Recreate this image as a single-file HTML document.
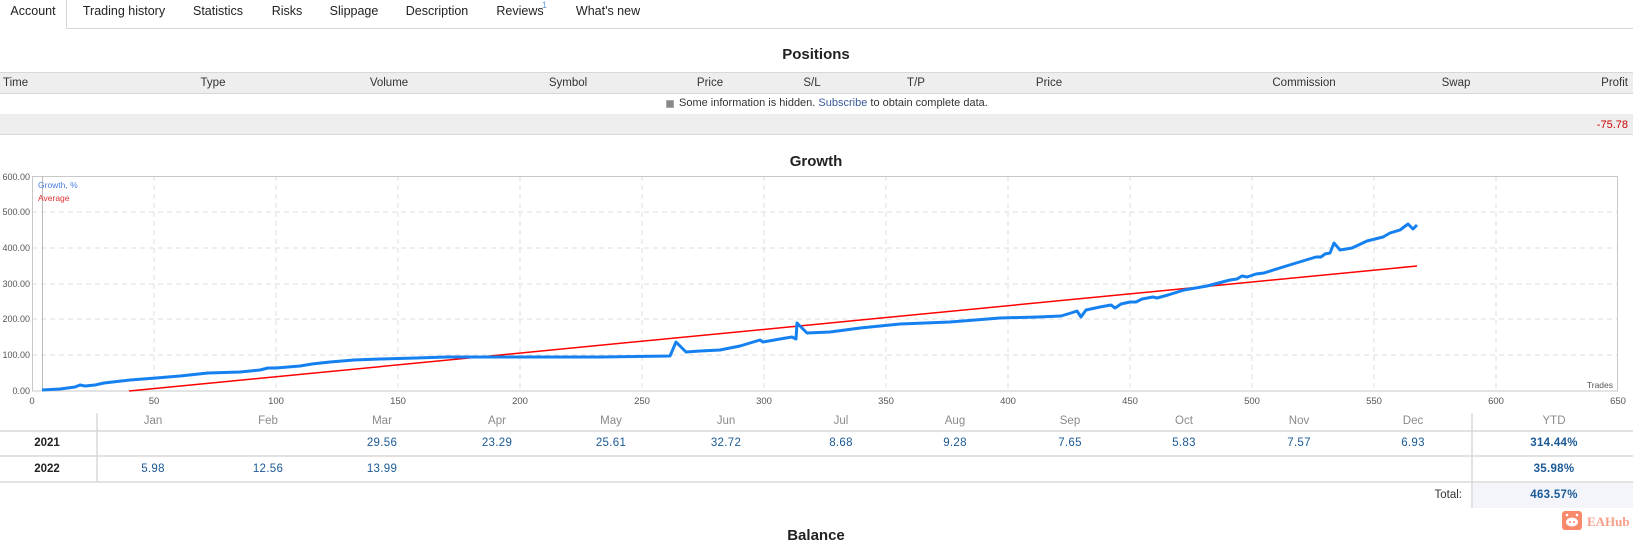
<!DOCTYPE html>
<html><head><meta charset="utf-8"><style>
*{margin:0;padding:0;box-sizing:border-box}
body{width:1633px;height:536px;overflow:hidden;background:#fff;font-family:"Liberation Sans",Tahoma,sans-serif;color:#333;position:relative}
.a{position:absolute;white-space:nowrap}
.t{font-size:12.5px;color:#222;top:4px;transform:translateX(-50%)}
.h{font-size:11.5px;color:#333;top:77px}
.c{transform:translateX(-50%)}
.title{font-size:15px;font-weight:bold;color:#222;transform:translateX(-50%);left:816px}
.mo{font-size:11.5px;color:#8a8a8a;top:415px;transform:translateX(-50%)}
.v{font-size:11.5px;color:#1a5a96;transform:translateX(-50%);letter-spacing:.3px}
.y{font-size:11.5px;color:#222;transform:translateX(-50%);left:47px;font-weight:bold}
</style></head><body>
<div class="a" style="left:0;top:28px;width:1633px;border-top:1px solid #d6d6d6"></div>
<div class="a" style="left:0;top:0;width:67px;height:29px;background:#fff;border-right:1px solid #d6d6d6"></div>
<div class="a t" style="left:33px">Account</div>
<div class="a t" style="left:124px">Trading history</div>
<div class="a t" style="left:218px">Statistics</div>
<div class="a t" style="left:287px">Risks</div>
<div class="a t" style="left:354px">Slippage</div>
<div class="a t" style="left:437px">Description</div>
<div class="a t" style="left:520px">Reviews</div>
<div class="a" style="left:542px;top:0;font-size:9px;color:#6a9ad6">1</div>
<div class="a t" style="left:608px">What's new</div>

<div class="a title" style="top:46px">Positions</div>
<div class="a" style="left:0;top:72px;width:1633px;height:22px;background:#eee;border-top:1px solid #d8d8d8;border-bottom:1px solid #d8d8d8"></div>
<div class="a h" style="left:3px">Time</div>
<div class="a h c" style="left:213px">Type</div>
<div class="a h c" style="left:389px">Volume</div>
<div class="a h c" style="left:568px">Symbol</div>
<div class="a h c" style="left:710px">Price</div>
<div class="a h c" style="left:812px">S/L</div>
<div class="a h c" style="left:916px">T/P</div>
<div class="a h c" style="left:1049px">Price</div>
<div class="a h c" style="left:1304px">Commission</div>
<div class="a h c" style="left:1456px">Swap</div>
<div class="a h" style="right:5px">Profit</div>
<div class="a" style="left:666px;top:100px;width:8px;height:8px;background:#888;border:1px solid #aaa"></div>
<div class="a" style="left:679px;top:97px;font-size:11px;color:#333">Some information is hidden. <span style="color:#3a5a9a">Subscribe</span> to obtain complete data.</div>
<div class="a" style="left:0;top:114px;width:1633px;height:21px;background:#eee;border-bottom:1px solid #d8d8d8"></div>
<div class="a" style="right:5px;top:119px;font-size:11px;color:#c00">-75.78</div>

<div class="a title" style="top:153px">Growth</div>

<svg class="a" style="left:0;top:0" width="1633" height="536" xmlns="http://www.w3.org/2000/svg">
<g stroke="#ddd" stroke-dasharray="5,4" stroke-width="1">
<line x1="32" y1="212" x2="1618" y2="212"/><line x1="32" y1="248" x2="1618" y2="248"/><line x1="32" y1="284" x2="1618" y2="284"/><line x1="32" y1="319" x2="1618" y2="319"/><line x1="32" y1="355" x2="1618" y2="355"/>
<line x1="154" y1="176" x2="154" y2="391"/><line x1="276" y1="176" x2="276" y2="391"/><line x1="398" y1="176" x2="398" y2="391"/><line x1="520" y1="176" x2="520" y2="391"/><line x1="642" y1="176" x2="642" y2="391"/><line x1="764" y1="176" x2="764" y2="391"/><line x1="886" y1="176" x2="886" y2="391"/><line x1="1008" y1="176" x2="1008" y2="391"/><line x1="1130" y1="176" x2="1130" y2="391"/><line x1="1252" y1="176" x2="1252" y2="391"/><line x1="1374" y1="176" x2="1374" y2="391"/><line x1="1496" y1="176" x2="1496" y2="391"/>
</g>
<rect x="32.5" y="176.5" width="1585" height="214.5" fill="none" stroke="#c8c8c8"/>
<line x1="42.5" y1="176" x2="42.5" y2="391" stroke="#bbb"/>
<g font-family="Liberation Sans,sans-serif" font-size="9" fill="#555" text-anchor="end">
<text x="30" y="180">600.00</text><text x="30" y="215">500.00</text><text x="30" y="251">400.00</text><text x="30" y="287">300.00</text><text x="30" y="322">200.00</text><text x="30" y="358">100.00</text><text x="30" y="394">0.00</text>
</g>
<g font-family="Liberation Sans,sans-serif" font-size="9.5" fill="#555" text-anchor="middle">
<text x="32" y="404">0</text><text x="154" y="404">50</text><text x="276" y="404">100</text><text x="398" y="404">150</text><text x="520" y="404">200</text><text x="642" y="404">250</text><text x="764" y="404">300</text><text x="886" y="404">350</text><text x="1008" y="404">400</text><text x="1130" y="404">450</text><text x="1252" y="404">500</text><text x="1374" y="404">550</text><text x="1496" y="404">600</text><text x="1618" y="404">650</text>
</g>
<text x="1613" y="388" font-family="Liberation Sans,sans-serif" font-size="8.5" fill="#555" text-anchor="end">Trades</text>
<text x="38" y="188" font-family="Liberation Sans,sans-serif" font-size="8.5" fill="#4a7ee0">Growth, %</text>
<text x="38" y="201" font-family="Liberation Sans,sans-serif" font-size="8.5" fill="#e03030">Average</text>
<line x1="129" y1="391" x2="1417" y2="266" stroke="#f00" stroke-width="1.5"/>
<polyline fill="none" stroke="#1581f0" stroke-width="3" stroke-linejoin="round" points="42,390 60,389 75,387 80,385 85,386 95,385 104,383 130,380 156,378 180,376 208,373 240,372 260,370 268,368 276,368 300,366 312,364 330,362 354,360 380,359 416,358 447,357 500,357 600,357 670,356 676,342 686,352 700,351 720,350 740,346 760,340 763,342 780,339 792,337 796,339 797,323 807,333 830,332 860,328 900,324 950,322 1000,318 1038,317 1061,316 1071,313 1077,311 1081,317 1086,310 1100,307 1111,305 1115,308 1121,304 1130,302 1136,302 1142,299 1153,297 1157,298 1168,295 1184,290 1207,286 1230,280 1237,279 1242,276 1247,277 1256,274 1264,273 1283,267 1306,260 1316,257 1321,257 1325,254 1330,253 1334,243 1340,250 1352,248 1367,241 1383,237 1390,233 1400,230 1408,224 1413,229 1417,225"/>
<g stroke="#d8d8d8" stroke-width="1.5">
<line x1="0" y1="431" x2="1633" y2="431"/><line x1="0" y1="456" x2="1633" y2="456"/><line x1="0" y1="482" x2="1633" y2="482"/>
<line x1="97" y1="413" x2="97" y2="482"/><line x1="1472" y1="413" x2="1472" y2="508"/>
</g>
<rect x="1473" y="483" width="160" height="25" fill="#f3f5fa"/>
<rect x="1562" y="511" width="20" height="19" rx="3" fill="#f8896a"/>
<ellipse cx="1572" cy="522" rx="6" ry="4.5" fill="#fff"/>
<circle cx="1570" cy="522" r="1" fill="#f8896a"/><circle cx="1574" cy="522" r="1" fill="#f8896a"/>
<circle cx="1567" cy="515" r="1.3" fill="#fff"/><circle cx="1577" cy="515" r="1.3" fill="#fff"/>
<text x="1587" y="526" font-family="Liberation Serif,serif" font-weight="bold" font-size="13" fill="#f8a08a">EAHub</text>
</svg>

<div class="a mo" style="left:153px">Jan</div>
<div class="a mo" style="left:268px">Feb</div>
<div class="a mo" style="left:382px">Mar</div>
<div class="a mo" style="left:497px">Apr</div>
<div class="a mo" style="left:611px">May</div>
<div class="a mo" style="left:726px">Jun</div>
<div class="a mo" style="left:841px">Jul</div>
<div class="a mo" style="left:955px">Aug</div>
<div class="a mo" style="left:1070px">Sep</div>
<div class="a mo" style="left:1184px">Oct</div>
<div class="a mo" style="left:1299px">Nov</div>
<div class="a mo" style="left:1413px">Dec</div>
<div class="a mo" style="left:1554px">YTD</div>

<div class="a y" style="top:437px">2021</div>
<div class="a v" style="top:437px;left:382px">29.56</div>
<div class="a v" style="top:437px;left:497px">23.29</div>
<div class="a v" style="top:437px;left:611px">25.61</div>
<div class="a v" style="top:437px;left:726px">32.72</div>
<div class="a v" style="top:437px;left:841px">8.68</div>
<div class="a v" style="top:437px;left:955px">9.28</div>
<div class="a v" style="top:437px;left:1070px">7.65</div>
<div class="a v" style="top:437px;left:1184px">5.83</div>
<div class="a v" style="top:437px;left:1299px">7.57</div>
<div class="a v" style="top:437px;left:1413px">6.93</div>
<div class="a v" style="top:437px;left:1554px;font-weight:bold">314.44%</div>

<div class="a y" style="top:463px">2022</div>
<div class="a v" style="top:463px;left:153px">5.98</div>
<div class="a v" style="top:463px;left:268px">12.56</div>
<div class="a v" style="top:463px;left:382px">13.99</div>
<div class="a v" style="top:463px;left:1554px;font-weight:bold">35.98%</div>

<div class="a" style="top:489px;right:171px;font-size:11.5px;color:#333">Total:</div>
<div class="a v" style="top:489px;left:1554px;font-weight:bold">463.57%</div>

<div class="a title" style="top:527px">Balance</div>
</body></html>
